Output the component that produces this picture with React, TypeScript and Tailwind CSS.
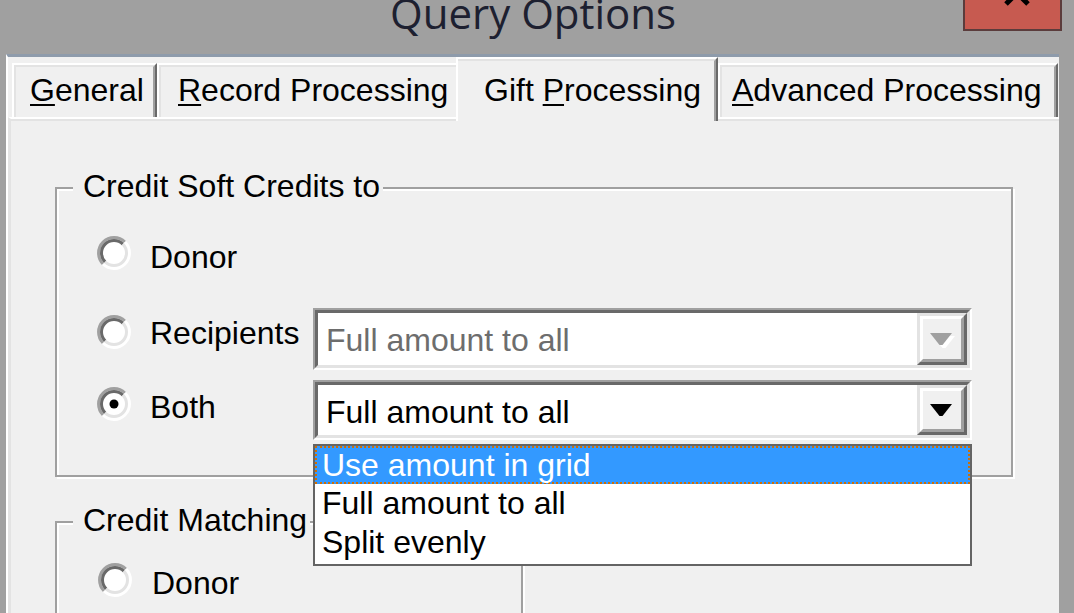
import type { ReactNode } from 'react';

const TEXT = 'text-[32px] leading-[33px]';

type TabProps = { pre?: string; u: string; post: string; w: string; pl: string; selected?: boolean };

const Tab = ({ pre = '', u, post, w, pl, selected }: TabProps) => {
  const label = (
    <span className="whitespace-nowrap">
      {pre}
      <span className="underline decoration-2 underline-offset-[3px]">{u}</span>
      {post}
    </span>
  );

  if (selected) {
    return (
      <div className={`${w} relative z-10 -mb-[4px] -ml-[4px] h-[64px] border-t-2 border-l-2 border-white border-r-2 border-r-[#696969] bg-[#f0f0f0]`}>
        <div className={`h-full overflow-hidden border-t-2 border-[#e3e3e3] border-r-2 border-r-[#a0a0a0] pt-[13px] ${pl} ${TEXT}`}>
          {label}
        </div>
      </div>
    );
  }

  return (
    <div className={`${w} h-[54px] border-t-2 border-l-2 border-white border-r-2 border-r-[#696969]`}>
      <div className={`h-full overflow-hidden border-t-2 border-l-2 border-[#e3e3e3] border-r-2 border-r-[#a0a0a0] pt-[7px] ${pl} ${TEXT}`}>
        {label}
      </div>
    </div>
  );
};

const Radio = ({ checked }: { checked?: boolean }) => (
  <svg width="34" height="34" viewBox="0 0 34 34" className="shrink-0">
    <circle cx="17" cy="17" r="16" fill="#fff" />
    <path d="M6.04 27.96 A15.5 15.5 0 0 1 27.96 6.04" stroke="#a0a0a0" strokeWidth="3" fill="none" />
    <path d="M27.96 6.04 A15.5 15.5 0 0 1 6.04 27.96" stroke="#ffffff" strokeWidth="3" fill="none" />
    <path d="M8.16 25.84 A12.5 12.5 0 0 1 25.84 8.16" stroke="#696969" strokeWidth="3" fill="none" />
    <path d="M25.84 8.16 A12.5 12.5 0 0 1 8.16 25.84" stroke="#e3e3e3" strokeWidth="3" fill="none" />
    {checked && <circle cx="17" cy="17" r="4.5" fill="#000" />}
  </svg>
);

const Arrow = ({ disabled }: { disabled?: boolean }) => (
  <svg width="26" height="15" viewBox="0 0 26 15">
    {disabled && <polygon points="3,3 25,3 15.5,15 12.5,15" fill="#fff" />}
    <polygon points="0,0 22,0 12.5,12 9.5,12" fill={disabled ? '#a0a0a0' : '#000'} />
  </svg>
);

const Combo = ({ text, disabled, h, children }: { text: string; disabled?: boolean; h: string; children?: ReactNode }) => (
  <div className={`relative w-[659px] ${h} border-2 border-t-[#a0a0a0] border-l-[#a0a0a0] border-r-white border-b-white`}>
    <div className="flex h-full border-[3px] border-t-[#696969] border-l-[#696969] border-r-[#e3e3e3] border-b-[#e3e3e3] bg-white">
      <div className={`flex-1 pl-[8px] pt-[11px] ${TEXT} ${disabled ? 'text-[#6d6d6d]' : 'text-black'}`}>{text}</div>
      <div className="h-full w-[50px] border-[3px] border-t-[#e3e3e3] border-l-[#e3e3e3] border-r-[#696969] border-b-[#696969] bg-[#f0f0f0]">
        <div className="flex h-full items-center justify-center border-[3px] border-t-white border-l-white border-r-[#a0a0a0] border-b-[#a0a0a0] pl-[2px] pt-[2px]">
          <Arrow disabled={disabled} />
        </div>
      </div>
    </div>
    {children}
  </div>
);

const GroupBox = ({ title, className, children }: { title: string; className: string; children: ReactNode }) => (
  <div className={`relative ml-[44px] border-2 border-[#a0a0a0] shadow-[2px_2px_0_#fff,inset_2px_2px_0_#fff] ${className}`}>
    <div className={`absolute left-[16px] top-[-19px] bg-[#f0f0f0] pl-[10px] pr-[3px] ${TEXT}`}>{title}</div>
    {children}
  </div>
);

const App = () => {
  return (
    <div className="flex h-[613px] w-[1074px] flex-col overflow-hidden bg-[#a0a0a0] font-['Liberation_Sans',Arial,sans-serif] text-black">
      {/* Title bar */}
      <div className="flex h-[54px] shrink-0">
        <div className="ml-[390px] -mt-[8px] whitespace-nowrap font-['Open_Sans',sans-serif] text-[42px] leading-[42px] text-[#1d2030]">
          Query Options
        </div>
        <div className="relative ml-auto mr-[12px] h-[31px] w-[99px] overflow-hidden border-2 border-t-0 border-[#5b3c3c] bg-[#c75a50]">
          <svg width="30" height="30" viewBox="0 0 30 30" className="absolute left-[37px] top-[-22px]">
            <path d="M4 4 L26 26 M26 4 L4 26" stroke="#000" strokeWidth="5" />
          </svg>
        </div>
      </div>

      <div className="flex min-h-0 flex-1 pl-[6px] pr-[15px]">
        <div className="flex flex-1 flex-col border-t-[3px] border-l-2 border-t-[#8e9bab] border-l-white bg-[#f0f0f0]">
          {/* Tabs */}
          <div className="flex h-[60px] shrink-0 items-end pl-[4px]">
            <Tab u="G" post="eneral" w="w-[145px]" pl="pl-[14px]" />
            <Tab u="R" post="ecord Processing" w="w-[303px]" pl="pl-[17px]" />
            <Tab pre="Gift " u="P" post="rocessing" w="w-[262px]" pl="pl-[26px]" selected />
            <Tab u="A" post="dvanced Processing" w="w-[340px]" pl="pl-[10px]" />
          </div>

          {/* Tab panel */}
          <div className="flex-1 border-t-2 border-l-[3px] border-t-white border-l-[#e3e3e3]">
            <div className="h-full border-t-2 border-[#e3e3e3] pt-[66px]">
              <GroupBox title="Credit Soft Credits to" className="h-[290px] w-[958px] pl-[40px] pt-[47px]">
                <div className="flex items-start">
                  <Radio />
                  <span className={`ml-[19px] mt-[5px] ${TEXT}`}>Donor</span>
                </div>

                <div className="mt-[34px] flex items-start">
                  <div className="flex w-[216px] items-start">
                    <div className="mt-[7px]"><Radio /></div>
                    <span className={`ml-[19px] mt-[9px] ${TEXT}`}>Recipients</span>
                  </div>
                  <Combo text="Full amount to all" h="h-[62px]" disabled />
                </div>

                <div className="mt-[10px] flex items-start">
                  <div className="flex w-[216px] items-start">
                    <div className="mt-[7px]"><Radio checked /></div>
                    <span className={`ml-[19px] mt-[11px] ${TEXT}`}>Both</span>
                  </div>
                  <Combo text="Full amount to all" h="h-[60px]">
                    {/* Open dropdown list */}
                    <div className="absolute left-[-2px] top-[62px] z-20 w-[659px] border-2 border-[#646464] bg-white pb-[2px] text-[32px]">
                      <div className="h-[38px] border-2 border-dotted border-[#d26e00] bg-[#3399ff] pl-[5px] leading-[34px] text-white">
                        Use amount in grid
                      </div>
                      <div className="h-[39px] pl-[7px] leading-[39px]">Full amount to all</div>
                      <div className="h-[39px] pl-[7px] leading-[39px]">Split evenly</div>
                    </div>
                  </Combo>
                </div>
              </GroupBox>

              <GroupBox title="Credit Matching" className="mt-[44px] h-[120px] w-[468px] pl-[41px] pt-[40px]">
                <div className="flex items-start">
                  <Radio />
                  <span className={`ml-[20px] mt-[4px] ${TEXT}`}>Donor</span>
                </div>
              </GroupBox>
            </div>
          </div>
        </div>
      </div>
    </div>
  );
};

export default App;
